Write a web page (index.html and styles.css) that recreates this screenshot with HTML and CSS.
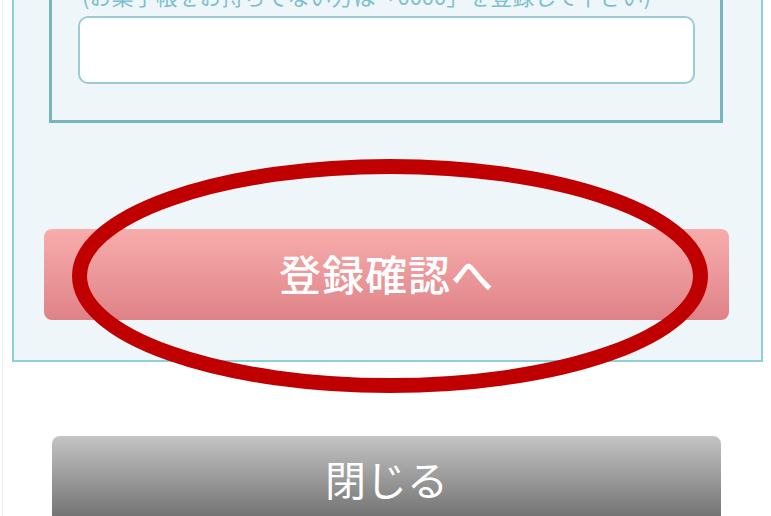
FILE: index.html
```html
<!DOCTYPE html>
<html lang="ja">
<head>
    <meta charset="UTF-8">
    <meta name="viewport" content="width=device-width, initial-scale=1.0">
    <title>お薬手帳登録</title>
    <link rel="stylesheet" href="styles.css">
</head>
<body>
    <div class="page">
        <section class="entry-panel">
            <div class="field-box">
                <p class="field-note">(お薬手帳をお持ちでない方は「0000」を登録して下さい)</p>
                <input type="text" class="field-input">
            </div>
            <button type="button" class="btn-confirm">登録確認へ</button>
        </section>
        <button type="button" class="btn-close">閉じる</button>
    </div>

    <!-- 注目マーク -->
    <svg class="highlight" width="771" height="516" viewBox="0 0 771 516">
        <ellipse cx="390" cy="276" rx="310.5" ry="109.5" fill="none" stroke="#c00000" stroke-width="15"/>
    </svg>
</body>
</html>
```

FILE: styles.css
```css
/* Estilos generales */
body {
    margin: 0;
    padding: 0;
    background-color: #ffffff;
    font-family: 'Noto Sans CJK JP', 'Noto Sans', sans-serif;
    overflow: hidden;
    height: 516px;
}

.page {
    margin-left: 2px;
    border-left: 1px solid #ececec;
    padding: 0 8px 0 9px;
    min-height: 516px;
}

/* Panel */
.entry-panel {
    margin-top: -42px;
    background-color: #eff6f9;
    border: 2px solid #8dd0dc;
    padding: 10px 0 40px 0;
}

.field-box {
    margin: 0 38px 0 35px;
    border: 3px solid #76b4c3;
    padding: 10px 25px 36px 26px;
}

.field-note {
    margin: 0 0 9px 4px;
    height: 24px;
    line-height: 24px;
    font-size: 22px;
    color: #7cc0ce;
    white-space: nowrap;
}

.field-input {
    display: block;
    box-sizing: border-box;
    width: 100%;
    height: 68px;
    border: 2px solid #9ccad5;
    border-radius: 10px;
    background-color: #ffffff;
    margin: 0;
}

/* Botones */
.btn-confirm {
    display: block;
    box-sizing: border-box;
    width: calc(100% - 62px);
    height: 91px;
    margin: 106px 32px 0 30px;
    border: none;
    border-radius: 8px;
    background: linear-gradient(to bottom, #f8acac, #ea9699 55%, #df8287);
    color: #ffffff;
    font-family: inherit;
    font-size: 42px;
    font-weight: 500;
    letter-spacing: 1px;
    padding: 0 0 4px 0;
}

.btn-close {
    display: block;
    box-sizing: border-box;
    width: 669px;
    height: 90px;
    margin: 74px 0 0 40px;
    border: none;
    border-radius: 8px;
    background: linear-gradient(to bottom, #c4c4c4, #6a6a6a);
    color: #ffffff;
    font-family: inherit;
    font-size: 41px;
    font-weight: 400;
    padding: 0 0 6px 0;
}

/* Marca roja */
.highlight {
    position: absolute;
    left: 0;
    top: 0;
    pointer-events: none;
}
```
